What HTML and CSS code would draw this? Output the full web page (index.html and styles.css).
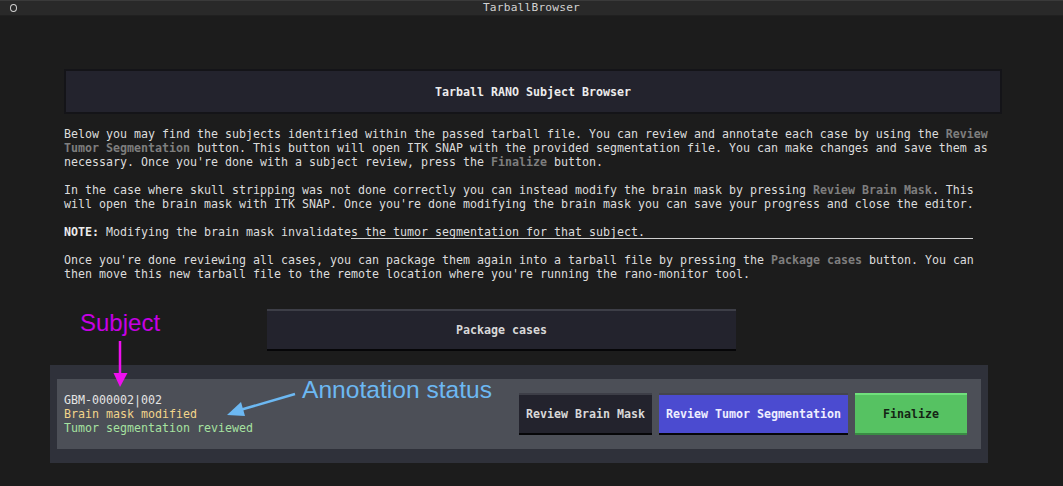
FILE: index.html
```html
<!DOCTYPE html>
<html lang="en">
<head>
<meta charset="utf-8">
<title>TarballBrowser</title>
<link rel="stylesheet" href="styles.css">
</head>
<body>
<div class="titlebar">
  <div class="tb-left"><span class="tb-dot"></span></div>
  <div class="tb-title">TarballBrowser</div>
  <div></div>
</div>
<main class="app">
  <div class="header">Tarball RANO Subject Browser</div>
  <div class="intro">
    <p>Below you may find the subjects identified within the passed tarball file. You can review and annotate each case by using the <span class="em">Review</span><br><span class="em">Tumor Segmentation</span> button. This button will open ITK SNAP with the provided segmentation file. You can make changes and save them as<br>necessary. Once you're done with a subject review, press the <span class="em">Finalize</span> button.</p>
    <p>In the case where skull stripping was not done correctly you can instead modify the brain mask by pressing <span class="em">Review Brain Mask</span>. This<br>will open the brain mask with ITK SNAP. Once you're done modifying the brain mask you can save your progress and close the editor.</p>
    <p class="note"><b>NOTE:</b> Modifying the brain mask invalidates the tumor segmentation for that subject.</p>
    <div class="note-rule"></div>
    <p>Once you're done reviewing all cases, you can package them again into a tarball file by pressing the <span class="em">Package cases</span> button. You can<br>then move this new tarball file to the remote location where you're running the rano-monitor tool.</p>
  </div>
  <button class="btn btn-dark btn-package">Package cases</button>
  <section class="panel">
    <div class="subject">
      <div class="subject-info">
        <div class="sid">GBM-000002|002</div>
        <div class="st-mask">Brain mask modified</div>
        <div class="st-seg">Tumor segmentation reviewed</div>
      </div>
      <div class="actions">
        <button class="btn btn-dark btn-mask">Review Brain Mask</button>
        <button class="btn btn-blue btn-seg">Review Tumor Segmentation</button>
        <button class="btn btn-green btn-fin">Finalize</button>
      </div>
    </div>
  </section>
</main>
<div class="annot annot-subject">Subject</div>
<div class="annot annot-status">Annotation status</div>
<svg class="arrows" width="1063" height="486" viewBox="0 0 1063 486" xmlns="http://www.w3.org/2000/svg">
  <line x1="120" y1="341" x2="120" y2="376" stroke="#ee10ee" stroke-width="2.5"/>
  <polygon points="113.5,373 127.5,373 120,387" fill="#ee10ee"/>
  <line x1="295" y1="394" x2="240" y2="410" stroke="#6cb8f2" stroke-width="2.5"/>
  <polygon points="227,415 241,402 245,416" fill="#6cb8f2"/>
</svg>
</body>
</html>
```
FILE: styles.css
```css
* { box-sizing: border-box; }
html, body { margin: 0; padding: 0; }
body {
  width: 1063px;
  height: 486px;
  overflow: hidden;
  position: relative;
  background: #1c1c1c;
  color: #dcdcdc;
  font-family: "DejaVu Sans Mono", "Liberation Mono", monospace;
  font-size: 11.63px;
  line-height: 14px;
}
.titlebar {
  height: 16px;
  background: #292929;
  border-top: 1px solid #3a3a3a;
  border-bottom: 1px solid #202020;
  display: grid;
  grid-template-columns: 1fr auto 1fr;
  align-items: center;
  color: #d2d2d2;
  font-size: 11.2px;
}
.tb-left { display: flex; align-items: center; padding-left: 10px; }
.tb-dot {
  width: 7px; height: 8px;
  border: 1.3px solid #cfcfcf;
  border-radius: 50%;
}
.tb-title { letter-spacing: 0.2px; }
.app { display: flex; flex-direction: column; align-items: flex-start; }
.header {
  margin: 53px 0 0 64px;
  width: 938px;
  height: 45px;
  border: 2px solid #141418;
  background: #23232d;
  display: flex;
  align-items: center;
  justify-content: center;
  font-weight: bold;
  color: #ececec;
}
.intro {
  margin: 13px 0 0 64px;
  white-space: nowrap;
}
.intro p { margin: 0 0 14px 0; }
.intro p:last-child { margin-bottom: 0; }
.em { color: #7e7e7e; font-weight: bold; }
.note b { color: #ececec; }
.note { margin-bottom: 0 !important; }
.note-rule {
  margin: -1px 0 14px 287px;
  width: 622px;
  height: 0;
  border-top: 1px solid #cfcfcf;
}
.btn {
  font-family: inherit;
  font-size: inherit;
  line-height: 14px;
  font-weight: bold;
  border: 0;
  border-top: 2px solid;
  border-bottom: 2px solid;
  padding: 0;
  height: 42px;
  display: flex;
  align-items: center;
  justify-content: center;
}
.btn-dark {
  background: #23232d;
  color: #d8d8d8;
  border-top-color: #3d3e47;
  border-bottom-color: #060608;
}
.btn-package { margin: 28px 0 0 267px; width: 469px; }
.btn-blue {
  background: #4b4bd0;
  color: #eeeeff;
  border-top-color: #44454e;
  border-bottom-color: #060608;
}
.btn-green {
  background: #56c262;
  color: #142414;
  border-top-color: #70e07c;
  border-bottom-color: #3a8c44;
}
.panel {
  margin: 14px 0 0 50px;
  width: 938px;
  height: 98px;
  padding: 14px 7px;
  background: #2f313a;
}
.subject {
  height: 70px;
  background: #4c4f57;
  padding: 14px 14px 14px 7px;
  display: flex;
  align-items: flex-start;
}
.subject-info { flex: 1; }
.sid { color: #e4e4e4; }
.st-mask { color: #f2d48a; }
.st-seg { color: #a6e2a0; }
.actions { display: flex; gap: 7px; }
.btn-mask { width: 133px; }
.btn-seg { width: 189px; }
.btn-fin { width: 112px; }
.annot {
  position: absolute;
  font-family: "Liberation Sans", Arial, sans-serif;
  font-size: 24px;
  line-height: 28px;
  white-space: nowrap;
}
.annot-subject { left: 80px; top: 309px; color: #c600e4; }
.annot-status { left: 302px; top: 376px; color: #6cb8f2; font-size: 24.6px; }
.arrows { position: absolute; left: 0; top: 0; pointer-events: none; }
```
